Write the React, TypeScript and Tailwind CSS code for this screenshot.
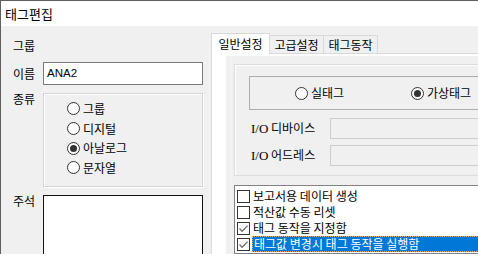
import clsx from 'clsx'

function Radio({ checked }: { checked?: boolean }) {
  return (
    <span className="w-[13px] h-[13px] rounded-full border border-[#333] bg-white flex items-center justify-center shrink-0">
      {checked && <span className="w-[7px] h-[7px] rounded-full bg-[#333]" />}
    </span>
  )
}

function Check({ checked }: { checked?: boolean }) {
  return (
    <span className="w-[13px] h-[13px] border border-[#333] bg-white flex items-center justify-center shrink-0">
      {checked && (
        <svg width="11" height="11" viewBox="0 0 11 11">
          <path d="M1.5 5.5 L4.2 8.2 L9.6 2.6" stroke="#707070" strokeWidth="1.3" fill="none" />
        </svg>
      )}
    </span>
  )
}

const kinds = [
  { label: '그룹', checked: false },
  { label: '디지털', checked: false },
  { label: '아날로그', checked: true },
  { label: '문자열', checked: false },
]

const options = [
  { label: '보고서용 데이터 생성', checked: false },
  { label: '적산값 수동 리셋', checked: false },
  { label: '태그 동작을 지정함', checked: true },
  { label: '태그값 변경시 태그 동작을 실행함', checked: true, selected: true },
]

export default function App() {
  return (
    <div className="w-[478px] h-[254px] overflow-hidden bg-[#f0f0f0] border-l border-t border-[#5f5f5f] text-[12px] text-black font-['Noto_Sans_CJK_KR',sans-serif] flex flex-col">
      <div className="h-[25px] shrink-0 bg-white flex items-center pl-[4px] text-[13px]">태그편집</div>

      <div className="flex flex-1 min-h-0">
        {/* left column */}
        <div className="w-[210px] shrink-0 flex flex-col pl-[12px] pt-[12px]">
          <div className="h-[16px] leading-[16px]">그룹</div>

          <div className="flex items-center mt-[8px]">
            <div className="w-[30px]">이름</div>
            <div className="w-[160px] h-[23px] border border-[#7a7a7a] bg-white flex items-center pl-[3px] font-['Liberation_Sans',sans-serif] text-[11.5px]">
              ANA2
            </div>
          </div>

          <div className="flex items-start mt-[8px]">
            <div className="w-[30px] leading-[12px]">종류</div>
            <div className="w-[160px] h-[94px] border border-[#d5d5d5] shadow-[inset_1px_1px_0_#fff,1px_1px_0_#fff] flex flex-col pl-[23px] pt-[5px]">
              {kinds.map((k) => (
                <div key={k.label} className="h-[19.7px] flex items-center gap-[3px]">
                  <Radio checked={k.checked} />
                  <span>{k.label}</span>
                </div>
              ))}
            </div>
          </div>

          <div className="flex items-start mt-[8px] flex-1">
            <div className="w-[30px] leading-[12px]">주석</div>
            <div className="w-[160px] h-[80px] border border-[#111] bg-white" />
          </div>
        </div>

        {/* tab control */}
        <div className="flex-1 flex flex-col pt-[7px] min-w-0">
          <div className="flex items-end h-[20px] shrink-0">
            <div className="relative z-10 w-[59px] h-[21px] mb-[-1px] bg-white border border-b-0 border-[#d9d9d9] flex items-center justify-center">
              일반설정
            </div>
            {['고급설정', '태그동작'].map((t) => (
              <div
                key={t}
                className="w-[54px] h-[18px] bg-[#f0f0f0] border-t border-r border-[#d9d9d9] flex items-center justify-center"
              >
                {t}
              </div>
            ))}
          </div>

          <div className="flex-1 bg-white border-t border-l border-[#d9d9d9] pl-[14px] pt-[2px] min-h-0">
            <div className="w-[300px] h-full bg-[#f0f0f0] pl-[8px] pt-[8px] flex flex-col">
              <div className="h-[112px] shrink-0 border border-[#dcdcdc] shadow-[inset_1px_1px_0_#fff] flex flex-col pl-[14px] pt-[11px]">
                <div className="h-[34px] border border-[#adadad] flex items-center pl-[45px]">
                  <div className="w-[116px] flex items-center gap-[3px]">
                    <Radio />
                    <span>실태그</span>
                  </div>
                  <div className="flex items-center gap-[3px]">
                    <Radio checked />
                    <span>가상태그</span>
                  </div>
                </div>

                <div className="flex items-center mt-[8px] pl-[2px]">
                  <div className="w-[79px]">
                    <span className="font-['Liberation_Serif',serif] text-[13px]">I/O</span> 디바이스
                  </div>
                  <div className="flex-1 h-[21px] border border-[#cccccc] bg-[#f0f0f0]" />
                </div>
                <div className="flex items-center mt-[6px] pl-[2px]">
                  <div className="w-[79px]">
                    <span className="font-['Liberation_Serif',serif] text-[13px]">I/O</span> 어드레스
                  </div>
                  <div className="flex-1 h-[21px] border border-[#cccccc] bg-[#f0f0f0]" />
                </div>
              </div>

              <div className="mt-[9px] flex-1 bg-white border border-[#828282] pl-[2px] pt-[2px] flex flex-col">
                {options.map((o) => (
                  <div key={o.label} className="h-[16px] flex items-center">
                    <Check checked={o.checked} />
                    <span
                      className={clsx(
                        'ml-[2px] pl-[1px] h-[16px] flex items-center',
                        o.selected ? 'flex-1 bg-[#0078d7] text-white border border-dotted border-[#e0b070]' : ''
                      )}
                    >
                      {o.label}
                    </span>
                  </div>
                ))}
              </div>
            </div>
          </div>
        </div>
      </div>
    </div>
  )
}
